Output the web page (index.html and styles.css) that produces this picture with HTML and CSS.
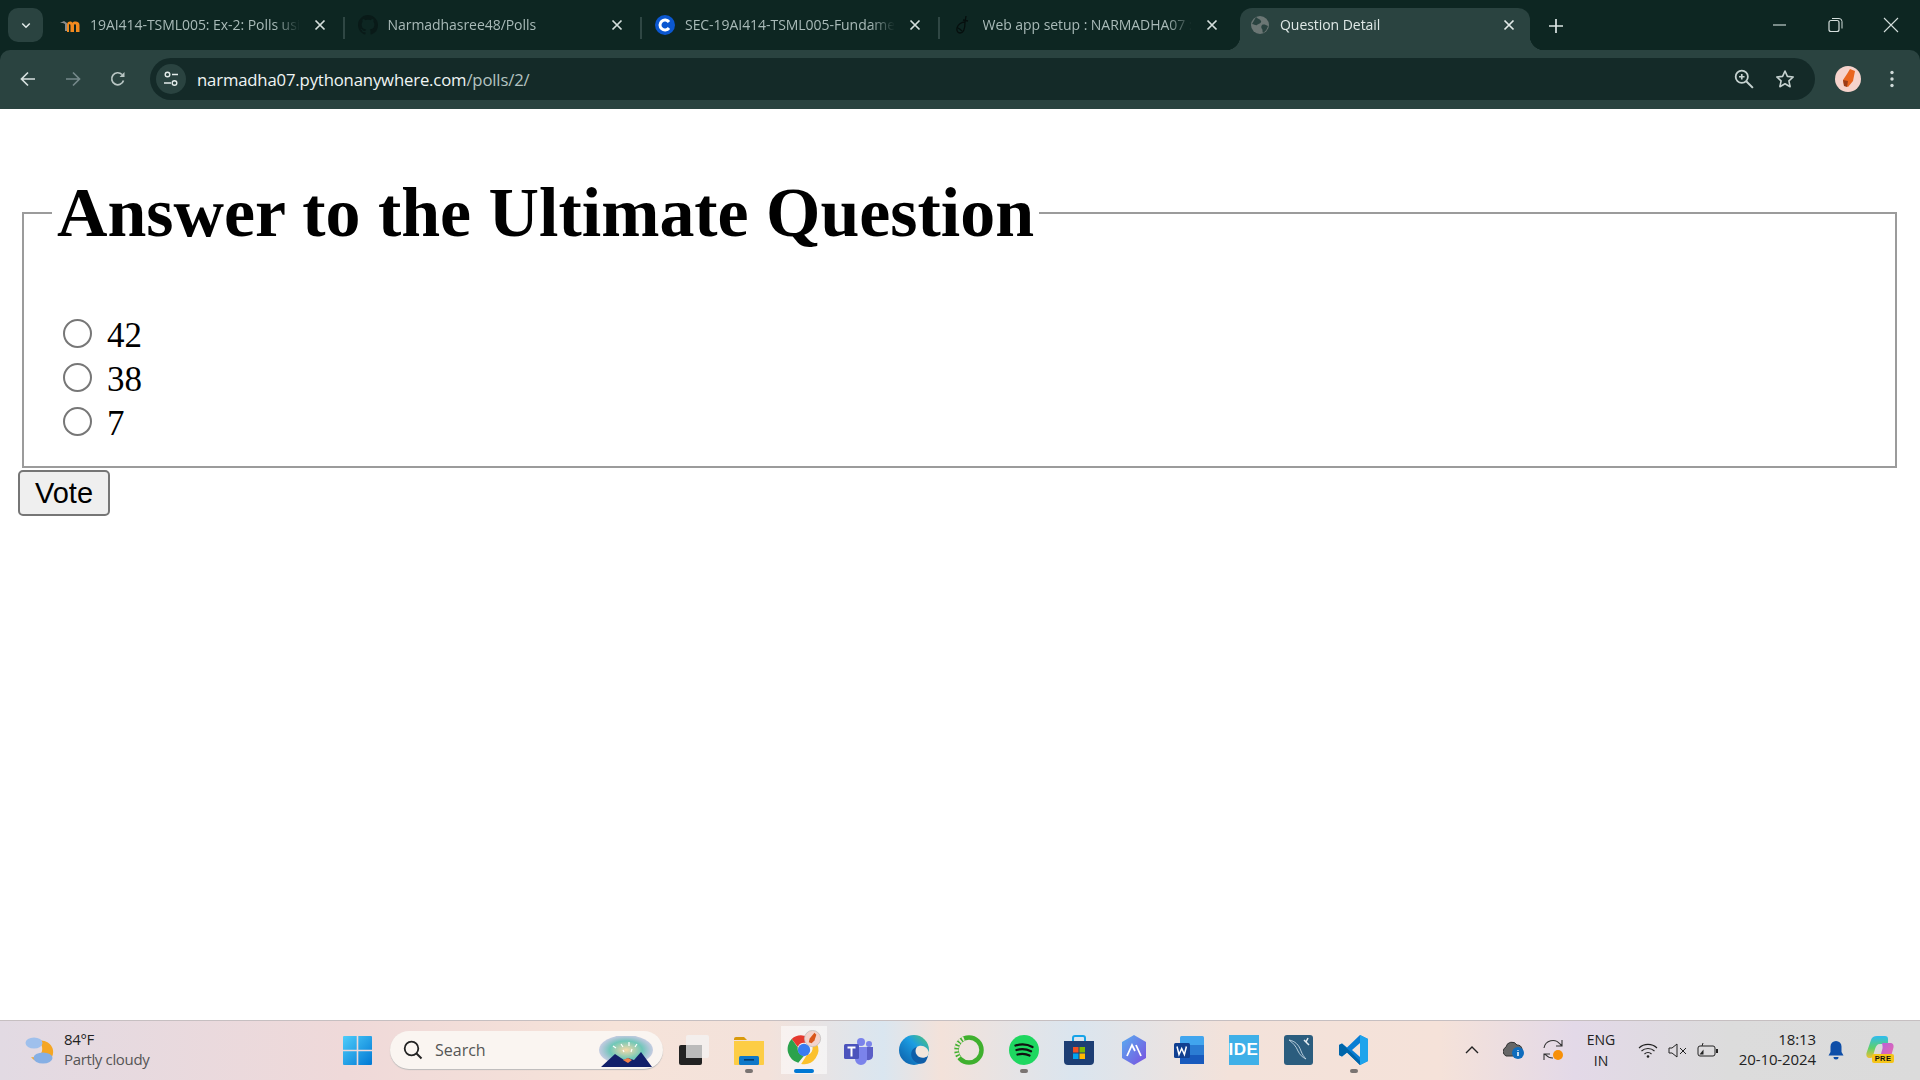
FILE: index.html
```html
<!DOCTYPE html>
<html lang="en">
<head>
<meta charset="utf-8">
<title>Question Detail</title>
<link rel="stylesheet" href="styles.css">
</head>
<body>
<header class="browser">
  <div class="tabstrip">
    <button class="tab-search"><svg viewBox="0 0 16 16" class="i12"><path d="M3 6l5 5 5-5" fill="none" stroke="#e4ecea" stroke-width="2"/></svg></button>
    <div class="tab">
      <svg class="favicon" viewBox="0 0 20 20"><path d="M0 8l4-2 3 2v8H5V9L3 8z" fill="#8b8b8b"/><path d="M7 17V9.500C7 7.500 8.500 6.500 10 6.500c1 0 2 .5 2.500 1.300C13 7 14 6.500 15.500 6.500c2.500 0 4 1.500 4 3.500v7h-3.500v-6.500c0-.8-.4-1.200-1-1.200s-1 .4-1 1.200V17h-3.500v-6.500c0-.8-.4-1.200-1-1.200s-.5.4-.5 1.200V17z" fill="#f28a1e"/></svg>
      <span class="tab-title">19AI414-TSML005: Ex-2: Polls using</span>
      <svg class="tab-close" viewBox="0 0 12 12"><path d="M1.500 1.500l9 9m0-9l-9 9" stroke="#d4dedc" stroke-width="1.700"/></svg>
      <i class="tab-sep"></i>
    </div>
    <div class="tab">
      <svg class="favicon" viewBox="0 0 16 16"><path fill="#091a18" d="M8 0C3.580 0 0 3.580 0 8c0 3.540 2.290 6.530 5.470 7.590.4.07.55-.17.55-.38 0-.19-.01-.82-.01-1.490-2.010.37-2.530-.49-2.690-.94-.09-.23-.48-.94-.82-1.130-.28-.15-.68-.52-.01-.53.63-.01 1.080.58 1.230.82.72 1.210 1.870.87 2.330.66.07-.52.28-.87.51-1.070-1.780-.2-3.640-.89-3.640-3.950 0-.87.31-1.590.82-2.150-.08-.2-.36-1.020.08-2.120 0 0 .67-.21 2.200.82.64-.18 1.320-.27 2-.27.68 0 1.360.09 2 .27 1.530-1.040 2.200-.82 2.200-.82.44 1.100.16 1.920.08 2.120.51.56.82 1.270.82 2.150 0 3.070-1.870 3.750-3.650 3.950.29.25.54.73.54 1.480 0 1.070-.01 1.930-.01 2.200 0 .21.15.46.55.38A8.013 8.013 0 0016 8c0-4.420-3.580-8-8-8z"/></svg>
      <span class="tab-title">Narmadhasree48/Polls</span>
      <svg class="tab-close" viewBox="0 0 12 12"><path d="M1.500 1.500l9 9m0-9l-9 9" stroke="#d4dedc" stroke-width="1.700"/></svg>
      <i class="tab-sep"></i>
    </div>
    <div class="tab">
      <svg class="favicon" viewBox="0 0 20 20"><circle cx="10" cy="10" r="10" fill="#0b57d0"/><path d="M14 7a5 5 0 1 0 0 6" fill="none" stroke="#fff" stroke-width="3"/></svg>
      <span class="tab-title">SEC-19AI414-TSML005-Fundamentals</span>
      <svg class="tab-close" viewBox="0 0 12 12"><path d="M1.500 1.500l9 9m0-9l-9 9" stroke="#d4dedc" stroke-width="1.700"/></svg>
      <i class="tab-sep"></i>
    </div>
    <div class="tab">
      <svg class="favicon" viewBox="0 0 20 20" fill="none" stroke="#060f0e" stroke-width="1.300"><path d="M13 1l-1 6c-3 0-7 2-8 6-.7 3 1 5 3 5 3 0 5-4 5-11"/><path d="M10 5l5 1M5 13c2 1 3 2 4 3"/></svg>
      <span class="tab-title">Web app setup : NARMADHA07 : Python</span>
      <svg class="tab-close" viewBox="0 0 12 12"><path d="M1.500 1.500l9 9m0-9l-9 9" stroke="#d4dedc" stroke-width="1.700"/></svg>
    </div>
    <div class="tab tab-active">
      <svg class="favicon" viewBox="0 0 20 20"><circle cx="10" cy="10" r="9" fill="#6b7674"/><path d="M6 2c2 2 4 2 5 4s-3 3-4 4-3-1-5-1zM12 10c2-1 4 0 6 1-1 3-2 5-5 7-1-2 0-3-1-4s-1-3 0-4z" fill="#2a4340"/></svg>
      <span class="tab-title tab-title-active">Question Detail</span>
      <svg class="tab-close" viewBox="0 0 12 12"><path d="M1.500 1.500l9 9m0-9l-9 9" stroke="#e2eae8" stroke-width="1.700"/></svg>
    </div>
    <svg class="new-tab" viewBox="0 0 14 14"><path d="M7 0v14M0 7h14" stroke="#dce6e4" stroke-width="1.700"/></svg>
    <div class="win-controls">
      <svg class="win-btn" viewBox="0 0 56 16"><path d="M22 8h13" stroke="#d4dedc" stroke-width="1.100"/></svg>
      <svg class="win-btn" viewBox="0 0 56 16"><rect x="22" y="3.500" width="10" height="11" rx="2" fill="none" stroke="#d4dedc" stroke-width="1.200"/><path d="M25 1.500h7a3 3 0 0 1 3 3v7" fill="none" stroke="#d4dedc"/></svg>
      <svg class="win-btn" viewBox="0 0 56 16"><path d="M21 1l14 14m0-14L21 15" stroke="#d4dedc" stroke-width="1.100"/></svg>
    </div>
  </div>
  <div class="toolbar">
    <svg class="nav-icon" viewBox="0 0 16 16"><path d="M15 8H2m6-6.500L1.500 8 8 14.500" fill="none" stroke="#d6e0de" stroke-width="1.700"/></svg>
    <svg class="nav-icon nav-dim" viewBox="0 0 16 16"><path d="M1 8h13M8 1.500L14.500 8 8 14.500" fill="none" stroke="#75898a" stroke-width="1.700"/></svg>
    <svg class="nav-icon" viewBox="0 0 16 16"><path d="M13.500 9.500A6 6 0 1 1 12 3.500" fill="none" stroke="#b9c6c4" stroke-width="1.700"/><path d="M14.500 1v5h-5z" fill="#b9c6c4"/></svg>
    <div class="omnibox">
      <span class="tune"><svg viewBox="0 0 16 16" class="i16"><circle cx="4.500" cy="3.500" r="2.300" fill="none" stroke="#e4ecea" stroke-width="1.400"/><path d="M9 3.500h6M1 12h7" stroke="#e4ecea" stroke-width="1.500"/><circle cx="11.500" cy="12" r="2.300" fill="none" stroke="#e4ecea" stroke-width="1.400"/></svg></span>
      <span class="url">narmadha07.pythonanywhere.com<span class="url-path">/polls/2/</span></span>
      <svg class="omni-icon" viewBox="0 0 18 18"><circle cx="7" cy="7" r="5.500" fill="none" stroke="#c6d2d0" stroke-width="1.600"/><path d="M11 11l6 6" stroke="#c6d2d0" stroke-width="1.800"/><path d="M7 4.500v5M4.500 7h5" stroke="#c6d2d0" stroke-width="1.500"/></svg>
      <svg class="omni-icon" viewBox="0 0 20 20"><path d="M10 2l2.400 5.400 5.800.6-4.300 3.900 1.200 5.800L10 14.800l-5.100 2.900 1.200-5.800L1.800 8l5.800-.6z" fill="none" stroke="#c6d2d0" stroke-width="1.600" stroke-linejoin="round"/></svg>
    </div>
    <svg class="avatar" viewBox="0 0 26 26"><circle cx="13" cy="13" r="13" fill="#f6d3cc"/><path d="M15 3l5 2-2 10-5 6-4-2-1-5 4-6z" fill="#e9651f"/><path d="M8 14l5 1-1 6-3-1z" fill="#9c3c18"/></svg>
    <svg class="menu" viewBox="0 0 4 18"><circle cx="2" cy="2.500" r="1.700" fill="#cfdad8"/><circle cx="2" cy="9" r="1.700" fill="#cfdad8"/><circle cx="2" cy="15.500" r="1.700" fill="#cfdad8"/></svg>
  </div>
</header>

<main class="page">
  <form class="poll">
    <fieldset class="poll-set">
      <legend class="poll-legend"><h1 class="poll-title">Answer to the Ultimate Question</h1></legend>
      <label class="choice"><input class="radio" type="radio" name="c"><span>42</span></label>
      <label class="choice"><input class="radio" type="radio" name="c"><span>38</span></label>
      <label class="choice"><input class="radio" type="radio" name="c"><span>7</span></label>
    </fieldset>
    <button type="button" class="vote">Vote</button>
  </form>
</main>

<footer class="taskbar">
  <div class="weather">
    <svg class="weather-icon" viewBox="0 0 30 30">
      <path d="M13 6a12 12 0 0 1 15 9c1 6-3 12-9 12-5 1-10-1-13-5 6 1 10-2 11-6 1-4-1-8-4-10z" fill="#f5a623"/>
      <ellipse cx="9" cy="8" rx="8.500" ry="5.500" fill="#9fc0ec"/>
      <ellipse cx="18" cy="23" rx="9.500" ry="5.500" fill="#86afe4"/>
    </svg>
    <div class="weather-text">
      <div class="temp">84°F</div>
      <div class="cond">Partly cloudy</div>
    </div>
  </div>
  <svg class="start" viewBox="0 0 29 29">
    <defs><linearGradient id="win" x1="0" y1="0" x2="1" y2="1"><stop offset="0" stop-color="#4fcdfa"/><stop offset="1" stop-color="#0078d4"/></linearGradient></defs>
    <path fill="url(#win)" d="M0 1a1 1 0 0 1 1-1h12.700v13.700H0zM15.300 0H28a1 1 0 0 1 1 1v12.700H15.300zM0 15.300h13.700V29H1a1 1 0 0 1-1-1zM15.300 15.300H29V28a1 1 0 0 1-1 1H15.300z"/>
  </svg>
  <div class="search">
    <svg class="search-icon" viewBox="0 0 20 20"><circle cx="8.500" cy="8.500" r="6.800" fill="none" stroke="#222" stroke-width="1.800"/><path d="M13.500 13.500l5 5" stroke="#222" stroke-width="2"/></svg>
    <span class="search-text">Search</span>
    <svg class="search-art" viewBox="0 0 54 32">
      <defs><radialGradient id="art" cx=".5" cy=".5" r=".6"><stop offset="0" stop-color="#f8d9a8"/><stop offset=".5" stop-color="#6fc8b8"/><stop offset="1" stop-color="#a99ae0" stop-opacity=".3"/></radialGradient></defs>
      <ellipse cx="27" cy="14" rx="27" ry="15" fill="url(#art)"/>
      <path d="M2 31l14-13 9 6 4-2 6 2 7-8 11 15z" fill="#12206a"/>
      <path d="M24 24l5-2 4 2-4 3z" fill="#f4814a"/>
      <path d="M14 10l3 2M22 8l2 3M30 6l0 4M38 8l-2 3M24 14l1 2M33 13l-1 3" stroke="#fff" stroke-width="1.200"/>
    </svg>
  </div>
  <div class="apps">
    <div class="app">
      <svg class="app-icon" viewBox="0 0 30 30"><rect x="0" y="10" width="23" height="20" rx="2" fill="#222"/><rect x="7" y="0" width="23" height="23" rx="2" fill="#f3f1f0" opacity=".85"/><rect x="7" y="10" width="16" height="13" fill="#bbb"/></svg>
    </div>
    <div class="app">
      <svg class="app-icon" viewBox="0 0 30 30"><path d="M0 4a2 2 0 0 1 2-2h8l3 3h-13z" fill="#d99a0c"/><path d="M0 6h30v23a1 1 0 0 1-1 1H1a1 1 0 0 1-1-1z" fill="#fdcd45"/><rect x="5" y="21" width="20" height="9" rx="1.500" fill="#0f78c8"/><rect x="10" y="24" width="10" height="1.600" fill="#053a6a"/></svg>
      <i class="dot"></i>
    </div>
    <div class="app app-active">
      <svg class="app-icon chrome" viewBox="0 0 40 40">
        <path d="M20 6a15 15 0 0 1 13 7.500H20a7 7 0 0 0-6.500 4.300L7 9.500A15 15 0 0 1 20 6z" fill="#e5392f"/>
        <path d="M7 9.500l6.500 9a7 7 0 0 0 6.500 8.500L14 34.500A15 15 0 0 1 7 9.500z" fill="#2ba24c"/>
        <path d="M33 13.500A15 15 0 0 1 17 35.700l6-9.500a7 7 0 0 0 3-12.700z" fill="#fbc12d"/>
        <circle cx="20" cy="21" r="6.500" fill="#3a7cf0"/>
        <circle cx="29" cy="9" r="8.500" fill="#f3d3cc" stroke="#bbb" stroke-width=".8"/>
        <path d="M31 3l2 2-2 6-3 3-3-1 1-4z" fill="#d9561b"/>
      </svg>
      <i class="active-bar"></i>
    </div>
    <div class="app">
      <svg class="app-icon" viewBox="0 0 30 30"><circle cx="25" cy="9" r="3" fill="#7b83eb"/><circle cx="17" cy="7" r="4" fill="#7b83eb"/><path d="M20 12h9v9a5 5 0 0 1-9 2z" fill="#5b5fc7"/><path d="M9 12h14v12a6 6 0 0 1-12 0z" fill="#7b83eb"/><rect x="0" y="9" width="15" height="15" rx="1.500" fill="#4b53bc"/><path d="M3.500 12.500h8M7.500 12.500v9" stroke="#fff" stroke-width="2"/></svg>
    </div>
    <div class="app">
      <svg class="app-icon" viewBox="0 0 30 30"><defs><linearGradient id="edge" x1="0" y1="1" x2="1" y2="0"><stop offset="0" stop-color="#0c59a4"/><stop offset=".6" stop-color="#1b9de2"/><stop offset="1" stop-color="#54c86b"/></linearGradient></defs><circle cx="15" cy="15" r="15" fill="url(#edge)"/><path d="M30 18c-1-5-5-8-10-7-4 1-6 5-4 9 2 4 7 5 12 2z" fill="#f2e6dc"/><path d="M29 21c-4 3-9 2-11-1-2-2-2-6 0-8-5 1-7 6-5 11 2 4 7 7 12 5 2-1 3-4 4-7z" fill="#0f5ea8"/></svg>
    </div>
    <div class="app">
      <svg class="app-icon" viewBox="0 0 30 30"><circle cx="15" cy="15" r="12.500" fill="none" stroke="#3fb02e" stroke-width="4.500"/><path d="M10 3.500A12.500 12.500 0 0 0 5 23" fill="none" stroke="#f0e2d8" stroke-width="4.500" stroke-dasharray="2 1.500"/></svg>
    </div>
    <div class="app">
      <svg class="app-icon" viewBox="0 0 30 30"><circle cx="15" cy="15" r="15" fill="#1ed760"/><path d="M6.500 10.500c6-1.800 12-1.300 17 1.500M7.500 15c5-1.400 10-1 14.500 1.300M8.500 19.500c4-1 8.500-.8 12 1" fill="none" stroke="#111" stroke-width="2.300" stroke-linecap="round"/></svg>
      <i class="dot"></i>
    </div>
    <div class="app">
      <svg class="app-icon" viewBox="0 0 30 30"><path d="M9 6V3a2 2 0 0 1 2-2h8a2 2 0 0 1 2 2v3" fill="none" stroke="#15a3e8" stroke-width="2"/><path d="M0 6h30v20a4 4 0 0 1-4 4H4a4 4 0 0 1-4-4z" fill="#1d3e74"/><rect x="9" y="12" width="5.500" height="5.500" fill="#f25022"/><rect x="15.500" y="12" width="5.500" height="5.500" fill="#7fba00"/><rect x="9" y="18.500" width="5.500" height="5.500" fill="#00a4ef"/><rect x="15.500" y="18.500" width="5.500" height="5.500" fill="#ffb900"/></svg>
    </div>
    <div class="app">
      <svg class="app-icon" viewBox="0 0 30 30"><defs><linearGradient id="aug" x1="0" y1="0" x2="1" y2="1"><stop offset="0" stop-color="#58aef0"/><stop offset="1" stop-color="#7a4fe0"/></linearGradient></defs><path d="M15 0l12 7v16l-12 7-12-7V7z" fill="url(#aug)"/><path d="M8 21l5-11 3 6M22 21l-5-11" fill="none" stroke="#fff" stroke-width="1.800"/></svg>
    </div>
    <div class="app">
      <svg class="app-icon" viewBox="0 0 30 30"><rect x="6" y="1" width="24" height="28" rx="1.500" fill="#41a5ee"/><rect x="6" y="10" width="24" height="10" fill="#2b7cd3"/><rect x="6" y="20" width="24" height="9" fill="#185abd"/><rect x="0" y="8" width="16" height="15" rx="1.500" fill="#103f91"/><path d="M3 11.500l2 8 2.700-6 2.700 6 2-8" fill="none" stroke="#fff" stroke-width="1.500"/></svg>
    </div>
    <div class="app">
      <span class="ide-tile">IDE</span>
    </div>
    <div class="app">
      <svg class="app-icon" viewBox="0 0 30 30"><rect width="29" height="30" rx="3" fill="#2b5d7e"/><path d="M5 5c6 1 10 5 12 11 1 3 3 6 5 8-4-2-6-4-8-8-2-5-5-8-9-11z" fill="none" stroke="#c5d8e4" stroke-width=".9"/><path d="M20 5l5 5M24 3l-2 4" stroke="#e6eef2" stroke-width="1.500"/></svg>
    </div>
    <div class="app">
      <svg class="app-icon" viewBox="0 0 30 30"><path d="M21 0l8 4v22l-8 4L8 17.500 3 21.500 0 20V10l3-1.500 5 4zM21 8l-8 7 8 7z" fill="#0a7ed4"/><path d="M21 0l8 4v22l-8 4z" fill="#1fa4ec"/><path d="M0 10l3-1.500 18 17.500v4L8 17.500 3 21.500 0 20z" fill="#0065a9"/></svg>
      <i class="dot"></i>
    </div>
  </div>
  <div class="tray">
    <svg class="tray-chev" viewBox="0 0 14 8"><path d="M1 7l6-6 6 6" fill="none" stroke="#222" stroke-width="1.400"/></svg>
    <svg class="tray-cloud" viewBox="0 0 22 20"><path d="M3 16a5 5 0 0 1 0-9 6 6 0 0 1 11-2 5 5 0 0 1 5 4v7H3z" fill="#666" stroke="#333"/><circle cx="15" cy="13" r="6" fill="#0f6cbd"/><path d="M15 10v.8M15 12v4" stroke="#fff" stroke-width="1.500"/></svg>
    <svg class="tray-sync" viewBox="0 0 22 22"><path d="M1 9a9 9 0 0 1 16-4l2 2M19 1v6h-6" fill="none" stroke="#333" stroke-width="1.100"/><path d="M10 19a9 9 0 0 1-7-3l-2-1M1 21v-6h6" fill="none" stroke="#333" stroke-width="1.100"/><circle cx="15" cy="16" r="5" fill="#f79009"/></svg>
    <div class="lang"><div>ENG</div><div>IN</div></div>
    <svg class="tray-wifi" viewBox="0 0 20 15"><path d="M1 5a13 13 0 0 1 18 0M3.500 8a9.500 9.500 0 0 1 13 0M6.500 11a5 5 0 0 1 7 0" fill="none" stroke="#222" stroke-width="1.100"/><circle cx="10" cy="13.500" r="1.300" fill="#222"/></svg>
    <svg class="tray-vol" viewBox="0 0 20 15"><path d="M1 5h3l5-4v13l-5-4H1z" fill="none" stroke="#222"/><path d="M12 5l6 6m0-6l-6 6" stroke="#222"/></svg>
    <svg class="tray-batt" viewBox="0 0 22 15"><rect x="1" y="3" width="17" height="10" rx="2" fill="none" stroke="#222"/><rect x="19" y="6" width="2" height="4" fill="#222"/><path d="M2.500 11.500l4-5v5z" fill="#222"/><path d="M5 3l1-3" stroke="#222"/></svg>
    <div class="clock"><div>18:13</div><div>20-10-2024</div></div>
    <svg class="tray-bell" viewBox="0 0 16 20"><path d="M8 1a5.500 5.500 0 0 1 5.500 5.500V12l2 3.500H.5L2.500 12V6.500A5.500 5.500 0 0 1 8 1z" fill="#0f4fa8"/><path d="M5.500 17h5a2.500 2.500 0 0 1-5 0z" fill="#0f4fa8"/></svg>
    <div class="copilot">
      <svg class="copilot-icon" viewBox="0 0 28 24"><defs><linearGradient id="cop" x1="0" y1="0" x2="0" y2="1"><stop offset="0" stop-color="#2ebcf0"/><stop offset=".55" stop-color="#5fd06a"/><stop offset="1" stop-color="#f0c030"/></linearGradient><linearGradient id="cop2" x1="0" y1="0" x2="1" y2="1"><stop offset="0" stop-color="#b05fe0"/><stop offset="1" stop-color="#f06aa8"/></linearGradient></defs><path d="M11 1h8c2 0 3 1 3 3v5H14c-3 0-4 2-5 5l-2 7c-.5 1.500-1.500 2-3 2-3 0-4-2-3.500-5L5 5c.7-2.500 3-4 6-4z" fill="url(#cop)"/><path d="M16 8h8c3 0 4 2 3.500 4.500l-2 7c-.7 2.500-3 4-6 4H11c2 0 3-1 3.500-3l2-7c.3-1.500 0-3-.5-5.500z" fill="url(#cop2)"/></svg>
      <span class="pre">PRE</span>
    </div>
  </div>
</footer>
</body>
</html>
```

FILE: styles.css
```css
* { box-sizing: border-box; }
html, body { margin: 0; height: 100%; }
body {
  width: 1920px; height: 1080px; overflow: hidden;
  display: flex; flex-direction: column;
  background: #fff;
  font-family: "Liberation Serif", serif;
}
svg { display: block; flex: none; }

/* Browser chrome */
.browser { flex: 0 0 109px; display: flex; flex-direction: column; background: #0d2622; font-family: "Open Sans", "Noto Sans", sans-serif; }
.tabstrip { flex: 0 0 50px; display: flex; align-items: flex-start; padding: 8px 0 0 8px; }
.tab-search { flex: 0 0 35px; height: 34px; border: 0; padding: 0; background: #2a4340; border-radius: 10px; display: flex; align-items: center; justify-content: center; }
.i12 { width: 12px; height: 12px; }
.i16 { width: 16px; height: 16px; }
.tab { position: relative; flex: 0 0 297.500px; min-width: 0; height: 42px; display: flex; align-items: center; padding: 0 15px 8px 17px; }
.favicon { width: 20px; height: 20px; margin-right: 10px; }
.tab-title {
  flex: 1; min-width: 0; margin-bottom: 2px; white-space: nowrap; overflow: hidden;
  font-size: 14px; color: #a9bab8; letter-spacing: -.05px;
  -webkit-mask-image: linear-gradient(90deg, #000 88%, transparent 100%);
  mask-image: linear-gradient(90deg, #000 88%, transparent 100%);
}
.tab-title-active { color: #dfe8e6; }
.tab-close { width: 12px; height: 12px; margin-left: 14px; }
.tab-sep { position: absolute; right: -4px; top: 9px; width: 2px; height: 22px; background: #2f4744; }
.tab-active { background: #2a4340; border-radius: 12px 12px 0 0; padding-left: 10px; flex-basis: 290px; margin-left: 7px; }
.tab-active::before, .tab-active::after { content: ""; position: absolute; bottom: 0; width: 14px; height: 14px; }
.tab-active::before { left: -14px; background: radial-gradient(circle at 0 0, transparent 14px, #2a4340 14.500px); }
.tab-active::after { right: -14px; background: radial-gradient(circle at 100% 0, transparent 14px, #2a4340 14.500px); }
.new-tab { width: 14px; height: 14px; margin: 11px 0 0 19px; }
.win-controls { margin-left: auto; display: flex; align-items: center; height: 34px; padding-right: 1px; }
.win-btn { width: 56px; height: 16px; }

.toolbar { flex: 1; display: flex; align-items: center; background: #2a4340; border-radius: 10px 10px 0 0; padding: 0 20px 1px 20px; }
.nav-icon { width: 16px; height: 16px; margin-right: 29px; }
.nav-icon:nth-of-type(3) { margin-right: 24px; }
.omnibox { flex: 0 0 1665px; height: 42px; border-radius: 21px; background: #142a28; display: flex; align-items: center; padding: 0 20px 0 6px; }
.tune { flex: 0 0 30px; height: 30px; border-radius: 50%; background: #2a4340; display: flex; align-items: center; justify-content: center; margin-right: 11px; }
.url { flex: 1; font-size: 16.700px; color: #f0f5f4; letter-spacing: -.15px; white-space: nowrap; }
.url-path { color: #b5c3c1; }
.omni-icon { width: 20px; height: 20px; margin-left: 21px; }
.avatar { width: 26px; height: 26px; margin-left: 20px; }
.menu { width: 4px; height: 18px; margin-left: 29px; }

/* Page */
.page { flex: 1; padding: 63px 18px 0; min-height: 0; }
.poll-set { margin: 0 5px 0 4px; padding: 0 27px 22px; border: 2px solid #9b9b9b; min-width: 0; }
.poll-legend { margin-left: 1px; padding: 0 5px; }
.poll-title { margin: 0; font-size: 69.900px; line-height: 81px; font-weight: bold; color: #000; white-space: nowrap; }
.choice { display: flex; height: 44px; gap: 15px; font-size: 35px; line-height: 48px; color: #000; align-items: flex-start; padding-left: 12px; }
.choice:first-of-type { margin-top: 59px; }
.radio { appearance: none; width: 29px; height: 29px; margin: 7px 0 0 0; flex: none; border: 2px solid #777; border-radius: 50%; background: #fff; }
.vote { display: block; width: 92px; height: 46px; margin-top: 2px; padding: 0; font: 29px "Liberation Sans", sans-serif; color: #000; background: #efefef; border: 2px solid #767676; border-radius: 5px; }

/* Taskbar */
.taskbar { flex: 0 0 60px; display: flex; align-items: center; border-top: 1px solid #c6bfc1; padding-bottom: 1px; color: #222; font-family: "Open Sans", "Noto Sans", sans-serif;
  background: linear-gradient(90deg, #e2dae3 0, #efd9d9 18%, #f6e3d9 32%, #f3e2db 40%, #dae6f0 46%, #f3e2da 49%, #dae5ef 56%, #f3e2da 64%, #f5e2d9 75%, #e3d9e8 82%, #dcdcdc 90%, #dbdbdb 100%);
}
.weather { flex: 0 0 343px; display: flex; align-items: center; gap: 9px; padding-left: 25px; }
.weather-icon { width: 30px; height: 30px; }
.weather-text { margin-top: -2px; font-size: 15px; line-height: 20px; letter-spacing: -.35px; }
.cond { color: #555; }
.start { width: 29px; height: 29px; }
.search { flex: 0 0 273px; height: 38px; margin: 0 3px 0 18px; border-radius: 19px; background: #faf5f1; box-shadow: 0 1px 1px #bbb; display: flex; align-items: center; padding: 0 10px 0 13px; }
.search-icon { width: 20px; height: 20px; }
.search-text { flex: 1; margin-left: 12px; font-size: 16px; color: #555; }
.search-art { width: 54px; height: 32px; margin-top: 4px; }
.apps { display: flex; }
.app { position: relative; flex: 0 0 55px; height: 48px; display: flex; align-items: center; justify-content: center; }
.app-icon { width: 30px; height: 30px; }
.app-active { background: linear-gradient(rgba(255,255,255,.55), rgba(255,255,255,.55)) center / 46px 48px no-repeat; border-radius: 5px; }
.chrome { width: 38px; height: 38px; margin-top: -3px; }
.dot { position: absolute; left: 50%; bottom: 1px; width: 8px; height: 4px; margin-left: -4px; border-radius: 2px; background: #7a7472; }
.active-bar { position: absolute; left: 50%; bottom: 1px; width: 20px; height: 4px; margin-left: -10px; border-radius: 2px; background: #0078d4; }
.ide-tile { width: 30px; height: 30px; background: #3fb0e8; color: #fff; font: bold 17px/30px "Liberation Sans", sans-serif; text-align: center; letter-spacing: .5px; }
.tray { flex: 1; display: flex; align-items: center; padding-left: 84px; }
.tray-chev { width: 14px; height: 8px; }
.tray-cloud { width: 22px; height: 20px; margin-left: 24px; }
.tray-sync { width: 22px; height: 22px; margin-left: 18px; }
.lang { width: 40px; margin-left: 16px; text-align: center; font-size: 14px; line-height: 21px; }
.tray-wifi { width: 20px; height: 15px; margin-left: 17px; }
.tray-vol { width: 20px; height: 15px; margin-left: 10px; }
.tray-batt { width: 22px; height: 15px; margin-left: 9px; }
.clock { width: 90px; margin: -2px 0 0 7px; text-align: right; font-size: 15px; line-height: 20px; letter-spacing: -.1px; }
.tray-bell { width: 16px; height: 20px; margin-left: 12px; }
.copilot { position: relative; width: 30px; height: 30px; margin-left: 22px; }
.copilot-icon { width: 28px; height: 24px; }
.pre { position: absolute; left: 6px; top: 19px; width: 22px; height: 9px; border-radius: 2px; background: #f5c518; color: #111; font: bold 7.500px/9px "Liberation Sans", sans-serif; text-align: center; letter-spacing: .4px; }
```
